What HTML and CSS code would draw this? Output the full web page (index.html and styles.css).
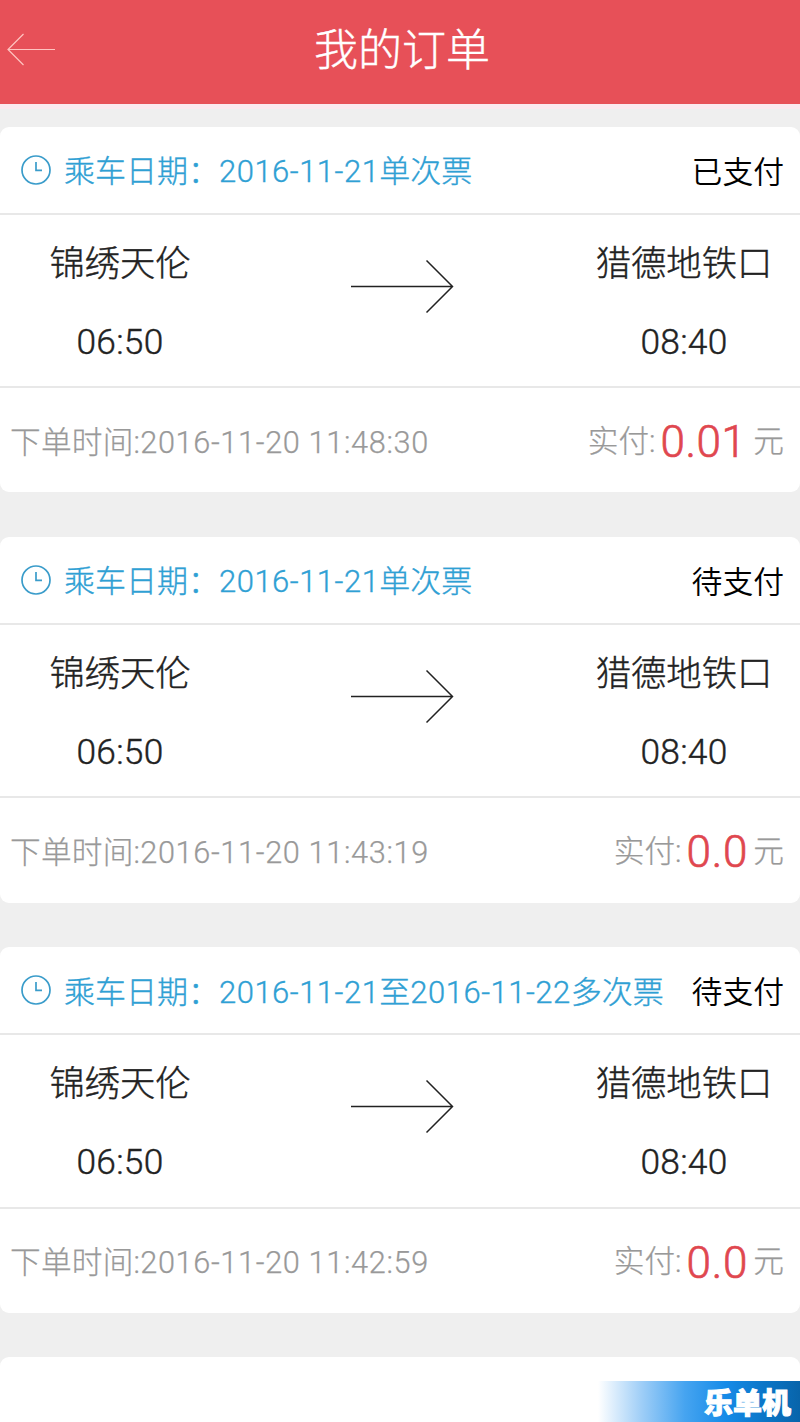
FILE: index.html
```html
<!DOCTYPE html>
<html lang="zh-CN">
<head>
<meta charset="utf-8">
<title>我的订单</title>
<link rel="stylesheet" href="styles.css">
</head>
<body>
<div class="screen">
  <header class="header">
    <svg class="back" width="50" height="34" viewBox="0 0 50 34"><path d="M49 16.500H2M17.500 1 2 16.500 17.500 32"/></svg>
    <h1 class="title">我的订单</h1>
  </header>
  <main class="orders">
    <article class="card">
      <div class="card-top">
        <svg class="clock" width="32" height="32" viewBox="0 0 32 32"><circle cx="16" cy="16" r="14"/><path d="M16 8v8.400h6"/></svg>
        <span class="date">乘车日期：<span class="num">2016-11-21</span>单次票</span>
        <span class="status">已支付</span>
      </div>
      <div class="route">
        <div class="stop from"><span class="place">锦绣天伦</span><span class="time">06:50</span></div>
        <svg class="arrow" width="104" height="56" viewBox="0 0 104 56"><path d="M0 28.500H101M75.500 2.500l26 26-26 26"/></svg>
        <div class="stop to"><span class="place">猎德地铁口</span><span class="time">08:40</span></div>
      </div>
      <div class="card-bottom">
        <span class="ordered">下单时间:<span class="num">2016-11-20 11:48:30</span></span>
        <span class="paid"><span class="label">实付:</span><span class="price">0.01</span><span class="unit">元</span></span>
      </div>
    </article>
    <article class="card">
      <div class="card-top">
        <svg class="clock" width="32" height="32" viewBox="0 0 32 32"><circle cx="16" cy="16" r="14"/><path d="M16 8v8.400h6"/></svg>
        <span class="date">乘车日期：<span class="num">2016-11-21</span>单次票</span>
        <span class="status">待支付</span>
      </div>
      <div class="route">
        <div class="stop from"><span class="place">锦绣天伦</span><span class="time">06:50</span></div>
        <svg class="arrow" width="104" height="56" viewBox="0 0 104 56"><path d="M0 28.500H101M75.500 2.500l26 26-26 26"/></svg>
        <div class="stop to"><span class="place">猎德地铁口</span><span class="time">08:40</span></div>
      </div>
      <div class="card-bottom">
        <span class="ordered">下单时间:<span class="num">2016-11-20 11:43:19</span></span>
        <span class="paid"><span class="label">实付:</span><span class="price short">0.0</span><span class="unit">元</span></span>
      </div>
    </article>
    <article class="card">
      <div class="card-top">
        <svg class="clock" width="32" height="32" viewBox="0 0 32 32"><circle cx="16" cy="16" r="14"/><path d="M16 8v8.400h6"/></svg>
        <span class="date">乘车日期：<span class="num">2016-11-21</span>至<span class="num">2016-11-22</span>多次票</span>
        <span class="status">待支付</span>
      </div>
      <div class="route">
        <div class="stop from"><span class="place">锦绣天伦</span><span class="time">06:50</span></div>
        <svg class="arrow" width="104" height="56" viewBox="0 0 104 56"><path d="M0 28.500H101M75.500 2.500l26 26-26 26"/></svg>
        <div class="stop to"><span class="place">猎德地铁口</span><span class="time">08:40</span></div>
      </div>
      <div class="card-bottom">
        <span class="ordered">下单时间:<span class="num">2016-11-20 11:42:59</span></span>
        <span class="paid"><span class="label">实付:</span><span class="price short">0.0</span><span class="unit">元</span></span>
      </div>
    </article>
    <article class="card next"></article>
  </main>
  <div class="watermark"><span>乐</span><span>单</span><span>机</span></div>
</div>
</body>
</html>
```
FILE: styles.css
```css
* { box-sizing: border-box; }
body { margin: 0; }
.screen {
  position: relative;
  width: 800px;
  height: 1422px;
  overflow: hidden;
  background: #efefef;
  color: #222;
  font-family: Roboto, "Noto Sans CJK SC", sans-serif;
  font-weight: 300;
  white-space: nowrap;
}
svg { display: block; fill: none; flex: none; }
.header {
  display: grid;
  grid-template-columns: 56px 1fr 56px;
  align-items: center;
  height: 109px;
  padding-bottom: 5px;
  background: #e75058;
  border-bottom: 5px solid #fbe9ef;
}
.back { margin-left: 6px; stroke: #ffc4c0; stroke-width: 1.2; }
.title {
  margin: 3px 0 0 4px;
  text-align: center;
  font-size: 44px;
  line-height: 60px;
  font-weight: 300;
  -webkit-text-stroke: 0.4px #fff;
  color: #fff;
}
.orders { display: flex; flex-direction: column; gap: 44.5px; padding-top: 17.500px; }
.card {
  flex: none;
  height: 365.8px;
  border-radius: 9px;
  background: #fff;
  overflow: hidden;
}
.card-top {
  display: flex;
  align-items: center;
  height: 88px;
  padding: 0 16px 0 20px;
  border-bottom: 2px solid #e8e8e8;
  font-size: 31px;
}
.clock { stroke: #3a9cca; stroke-width: 1.7; }
.date { margin: -2px 0 0 12px; color: #2fa0d4; -webkit-text-stroke: 0.35px; }
.num { letter-spacing: 0.5px; }
.status { margin: -1px 0 0 auto; color: #000; font-size: 30.800px; font-weight: 350; }
.route {
  display: grid;
  grid-template-columns: 240px 1fr 232px;
  height: 173.500px;
  border-bottom: 2px solid #e8e8e8;
}
.stop {
  display: flex;
  flex-direction: column;
  align-items: center;
  padding-top: 23px;
  font-size: 35.300px;
  -webkit-text-stroke: 0.4px;
}
.place { height: 52px; line-height: 52px; }
.time { margin-top: 26px; height: 52px; line-height: 52px; letter-spacing: 0.3px; }
.arrow { margin: 43px 0 0 111px; stroke: #222; stroke-width: 1.5; }
.card-bottom {
  display: flex;
  align-items: center;
  justify-content: space-between;
  height: 104px;
  padding: 4px 16px 0 10px;
  font-size: 30.700px;
  color: #999;
  -webkit-text-stroke: 0.25px;
}
.ordered { margin-top: -6px; letter-spacing: 0.2px; }
.ordered .num { letter-spacing: 0.65px; }
.paid { display: flex; align-items: center; line-height: 52px; }
.paid .label { margin-top: -1px; }
.paid .unit { margin-top: -1px; }
.price { margin: 0 7px 0 5px; font-size: 44px; letter-spacing: 0.5px; color: #e0474f; -webkit-text-stroke: 0.7px; }
.price.short { margin-right: 5px; letter-spacing: 0.8px; }
.next { height: 120px; }
.watermark {
  position: absolute;
  right: 0;
  bottom: 0;
  display: flex;
  justify-content: flex-end;
  width: 202px;
  height: 41px;
  padding-right: 9px;
  font: 900 29px/41px "Noto Sans CJK SC", sans-serif;
  color: #fff;
  -webkit-text-stroke: 1px #fff;
  background: linear-gradient(90deg, #fff 0%, #9dcdf7 22%, #46a4f0 43%, #168be8 63%, #0b76c8 82%, #0864aa 100%);
}
```
